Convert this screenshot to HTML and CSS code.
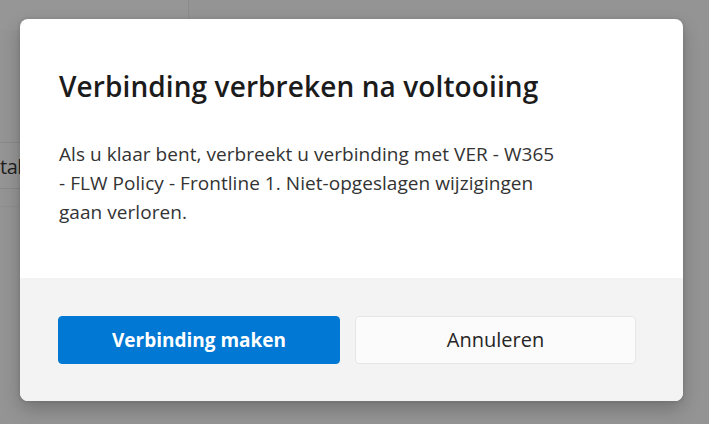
FILE: index.html
```html
<!DOCTYPE html>
<html lang="nl">
<head>
<meta charset="utf-8">
<link rel="stylesheet" href="styles.css">
</head>
<body>
<div class="page">
  <div class="side-top"></div>
  <div class="side-row"><span class="side-text">tal</span></div>
  <div class="side-row2"></div>
</div>
<div class="backdrop">
  <div class="dialog">
    <div class="dialog-body">
      <h1 class="title">Verbinding verbreken na voltooiing</h1>
      <p class="message">Als u klaar bent, verbreekt u verbinding met VER - W365 - FLW Policy - Frontline 1. Niet-opgeslagen wijzigingen gaan verloren.</p>
    </div>
    <div class="dialog-footer">
      <button class="btn btn-primary">Verbinding maken</button>
      <button class="btn btn-secondary">Annuleren</button>
    </div>
  </div>
</div>
</body>
</html>
```
FILE: styles.css
```css
html, body {
  margin: 0;
  padding: 0;
  width: 709px;
  height: 424px;
  overflow: hidden;
  background: #949494;
  font-family: "Open Sans", "Noto Sans", sans-serif;
}
.page {
  position: absolute;
  inset: 0;
}
.side-top {
  width: 188px;
  height: 30px;
  border-right: 1px solid #8c8c8c;
  background: #969696;
}
.side-row {
  margin-top: 112px;
  width: 60px;
  height: 45px;
  border-top: 1px solid #898989;
  border-bottom: 1px solid #898989;
  background: #959595;
  display: flex;
  align-items: center;
}
.side-text {
  margin-left: 0;
  padding-top: 2px;
  font-size: 20px;
  color: #1e1e1e;
  letter-spacing: -0.5px;
}
.side-row2 {
  margin-top: 17px;
  width: 60px;
  border-top: 1px solid #8e8e8e;
}
.backdrop {
  position: absolute;
  inset: 0;
}
.dialog {
  position: absolute;
  left: 20px;
  top: 19px;
  width: 663px;
  height: 382px;
  background: #ffffff;
  border-radius: 8px;
  overflow: hidden;
  box-shadow: 0 8px 18px rgba(0,0,0,0.22), 0 0 4px rgba(0,0,0,0.12);
  display: flex;
  flex-direction: column;
}
.dialog-body {
  flex: 1;
  padding: 47px 38px 0 39px;
}
.title {
  margin: 0;
  font-size: 28px;
  font-weight: 600;
  line-height: 40px;
  color: #1b1b1b;
  letter-spacing: 0.1px;
}
.message {
  margin: 34px 0 0 0;
  width: 502px;
  font-size: 19px;
  line-height: 29px;
  color: #333333;
  letter-spacing: 0.05px;
}
.dialog-footer {
  height: 123px;
  background: #f3f3f3;
  display: flex;
  align-items: center;
  gap: 15px;
  padding-left: 38px;
}
.btn {
  width: 282px;
  height: 48px;
  border-radius: 4px;
  font-family: inherit;
  cursor: pointer;
}
.btn-primary {
  background: #0078d4;
  border: 1px solid #0078d4;
  color: #ffffff;
  font-size: 19px;
  font-weight: 700;
}
.btn-secondary {
  width: 281px;
  background: #fbfbfb;
  border: 1px solid #e6e6e6;
  color: #262626;
  font-size: 20px;
  font-weight: 400;
}
```
